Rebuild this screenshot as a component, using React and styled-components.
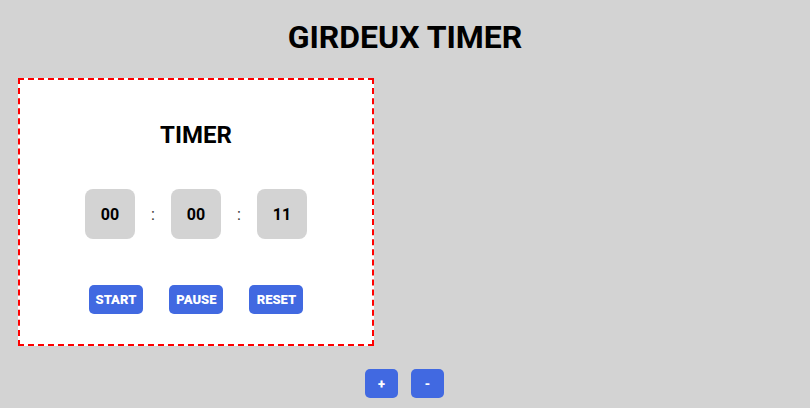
import styled, { createGlobalStyle } from "styled-components";

const GlobalStyle = createGlobalStyle`
  body {
    margin: 0;
    background: #d3d3d3;
    font-family: Roboto, "Liberation Sans", sans-serif;
  }
`;

const pad = (n) => String(n).padStart(2, "0");

const App = () => {
  const time = { h: 0, m: 0, s: 11 };

  return (
    <>
      <GlobalStyle />
      <Page>
        <Heading>GIRDEUX TIMER</Heading>
        <Card>
          <CardTitle>TIMER</CardTitle>
          <Clock>
            <Digit>{pad(time.h)}</Digit>
            <Colon>:</Colon>
            <Digit>{pad(time.m)}</Digit>
            <Colon>:</Colon>
            <Digit>{pad(time.s)}</Digit>
          </Clock>
          <Controls>
            <Button>START</Button>
            <Button>PAUSE</Button>
            <Button>RESET</Button>
          </Controls>
        </Card>
        <Adjust>
          <SmallButton>+</SmallButton>
          <SmallButton>-</SmallButton>
        </Adjust>
      </Page>
    </>
  );
};

export default App;

const Page = styled.div`
  display: flex;
  flex-direction: column;
  padding-top: 18px;
`;
const Heading = styled.h1`
  margin: 0;
  font-size: 32px;
  line-height: 38px;
  font-weight: 700;
  text-align: center;
  color: #000;
`;
const Card = styled.div`
  box-sizing: border-box;
  margin: 22px 0 0 18px;
  width: 356px;
  height: 268px;
  background: #fff;
  border: 2px dashed red;
  display: flex;
  flex-direction: column;
  align-items: center;
  padding-top: 41px;
`;
const CardTitle = styled.h2`
  margin: 0;
  font-size: 24px;
  line-height: 28px;
  font-weight: 700;
  color: #000;
`;
const Clock = styled.div`
  display: flex;
  align-items: center;
  margin-top: 40px;
`;
const Digit = styled.div`
  width: 50px;
  height: 50px;
  border-radius: 8px;
  background: #d3d3d3;
  display: flex;
  align-items: center;
  justify-content: center;
  font-size: 16px;
  font-weight: 700;
  color: #000;
`;
const Colon = styled.span`
  width: 36px;
  text-align: center;
  font-size: 16px;
  color: #333;
`;
const Controls = styled.div`
  display: flex;
  gap: 26px;
  margin-top: 46px;
`;
const Button = styled.button`
  height: 29px;
  min-width: 54px;
  padding: 0 7px;
  border: none;
  border-radius: 5px;
  background: #4169e1;
  color: #fff;
  font-family: Roboto, "Liberation Sans", sans-serif;
  font-size: 13px;
  font-weight: 900;
  cursor: pointer;
`;
const Adjust = styled.div`
  display: flex;
  justify-content: center;
  gap: 13px;
  margin-top: 23px;
  padding-right: 1px;
`;
const SmallButton = styled(Button)`
  width: 33px;
  min-width: 0;
  padding: 0;
`;
